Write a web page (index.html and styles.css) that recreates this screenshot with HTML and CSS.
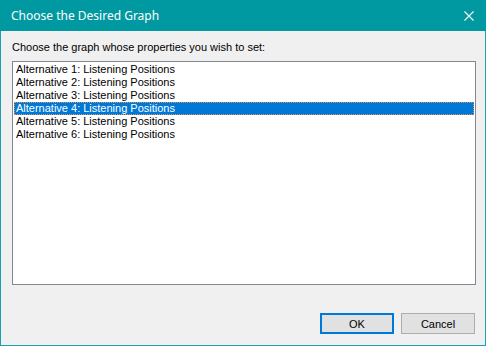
FILE: index.html
```html
<!DOCTYPE html>
<html>
<head>
<meta charset="utf-8">
<link rel="stylesheet" href="styles.css">
</head>
<body>
<div class="window">
  <div class="titlebar">
    <span class="title">Choose the Desired Graph</span>
    <svg class="close" width="10" height="10" viewBox="0 0 10 10"><path d="M0.5 0.5 L9.5 9.5 M9.5 0.5 L0.5 9.5" stroke="#fff" stroke-width="1.1"/></svg>
  </div>
  <div class="content">
    <div class="label">Choose the graph whose properties you wish to set:</div>
    <div class="listbox">
      <div class="item">Alternative 1: Listening Positions</div>
      <div class="item">Alternative 2: Listening Positions</div>
      <div class="item">Alternative 3: Listening Positions</div>
      <div class="item selected">Alternative 4: Listening Positions</div>
      <div class="item">Alternative 5: Listening Positions</div>
      <div class="item">Alternative 6: Listening Positions</div>
    </div>
    <div class="buttons">
      <div class="btn default">OK</div>
      <div class="btn">Cancel</div>
    </div>
  </div>
</div>
</body>
</html>
```
FILE: styles.css
```css
html, body { margin: 0; padding: 0; background: #fff; }
.window {
  width: 486px; height: 346px; box-sizing: border-box;
  border: 1px solid #18a3ac; border-top: none;
  background: #f0f0f0;
  display: flex; flex-direction: column;
  font-family: "Liberation Sans", Arial, sans-serif;
}
.titlebar {
  height: 31px; background: #0099a1; margin: 0 -1px;
  display: flex; align-items: center; justify-content: space-between;
  padding: 0 11px 0 11px;
}
.title { color: #fff; font-size: 12px; font-family: "Noto Sans", sans-serif; }
.close { margin-right: 1px; }
.content { padding: 10px 9px 0 11px; display: flex; flex-direction: column; }
.label { font-size: 11px; line-height: 13px; color: #000; height: 13px; }
.listbox {
  margin-top: 7px; width: 464px; height: 224px; box-sizing: border-box;
  border: 1px solid #828790; background: #fff; padding: 1px 1px;
}
.item { font-size: 11px; line-height: 13px; height: 13px; padding-left: 2px; color: #000; white-space: nowrap; }
.item.selected { background: #0078d7; color: #fff; outline: 1px dotted #e09050; outline-offset: -1px; }
.buttons { display: flex; justify-content: flex-end; gap: 7px; margin-top: 28px; margin-right: 1px; }
.btn {
  width: 74px; height: 21px; box-sizing: border-box;
  border: 1px solid #adadad; background: #e1e1e1;
  font-size: 11px; display: flex; align-items: center; justify-content: center; color: #000;
}
.btn.default { border: 2px solid #0078d7; }
```
